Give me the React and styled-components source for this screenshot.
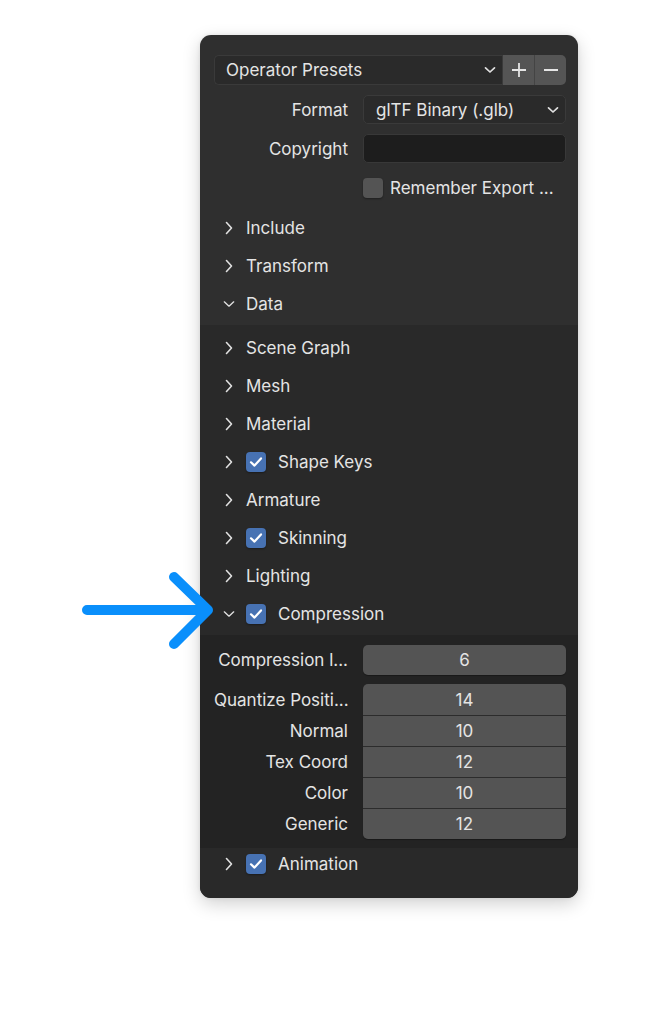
import React from 'react'
import styled, { createGlobalStyle } from 'styled-components'

const GlobalStyle = createGlobalStyle`
  html, body {
    margin: 0;
    padding: 0;
    background: #ffffff;
  }
  body {
    font-family: Inter, "Noto Sans", sans-serif;
  }
`;

const Page = styled.div`
  position: relative;
  width: 665px;
  height: 1024px;
  padding: 35px 0 0 200px;
  box-sizing: border-box;
`;

const Panel = styled.div`
  width: 378px;
  height: 863px;
  background: #2f2f2f;
  border-radius: 11px;
  overflow: hidden;
  box-shadow: 0 6px 18px rgba(0, 0, 0, 0.18), 0 0 4px rgba(0, 0, 0, 0.08);
  display: flex;
  flex-direction: column;
  padding-top: 20px;
  box-sizing: border-box;
  color: #e4e4e4;
  font-size: 17px;
`;

const Top = styled.div`
  display: flex;
  flex-direction: column;
  gap: 10px;
  padding: 0 12px 0 14px;
`;

const PresetsRow = styled.div`
  display: flex;
  height: 30px;
`;

const PresetSelect = styled.div`
  flex: 1;
  display: flex;
  align-items: center;
  justify-content: space-between;
  padding: 0 6px 0 11px;
  background: #2a2a2a;
  border: 1px solid #3a3a3a;
  border-right: none;
  border-radius: 5px 0 0 5px;
`;

const SquareButton = styled.div`
  width: 31px;
  display: flex;
  align-items: center;
  justify-content: center;
  background: #555555;
  border-left: 1px solid ${p => (p.$first ? '#3a3a3a' : '#444444')};
  border-radius: ${p => (p.$last ? '0 5px 5px 0' : '0')};
`;

const PropRow = styled.div`
  display: grid;
  grid-template-columns: 134px 1fr;
  column-gap: 15px;
  align-items: center;
  height: ${p => (p.$h ? `${p.$h}px` : 'auto')};
`;

const Label = styled.div`
  text-align: right;
  white-space: nowrap;
`;

const Select = styled.div`
  height: 29px;
  box-sizing: border-box;
  display: flex;
  align-items: center;
  justify-content: space-between;
  padding: 0 6px 0 12px;
  background: #2a2a2a;
  border: 1px solid #3a3a3a;
  border-radius: 5px;
`;

const TextField = styled.div`
  height: 29px;
  box-sizing: border-box;
  background: #1d1d1d;
  border: 1px solid #383838;
  border-radius: 5px;
`;

const CheckRow = styled.div`
  display: flex;
  align-items: center;
  gap: 7px;
`;

const Box = styled.div`
  width: 20px;
  height: 20px;
  box-sizing: border-box;
  border-radius: 4px;
  background: ${p => (p.$on ? '#4772b3' : '#545454')};
  box-shadow: 0 1px 2px rgba(0, 0, 0, 0.35);
  display: flex;
  align-items: center;
  justify-content: center;
  flex-shrink: 0;
`;

const Sections = styled.div`
  display: flex;
  flex-direction: column;
  padding-top: 7px;
`;

const HeaderRow = styled.div`
  display: flex;
  align-items: center;
  height: ${p => p.$h || 38}px;
  flex-shrink: 0;
  padding-left: 23px;
`;

const Chevron = styled.div`
  width: 12px;
  display: flex;
  justify-content: center;
  margin-right: 11px;
`;

const HeaderCheck = styled.div`
  display: flex;
  align-items: center;
  gap: 12px;
`;

const DataBody = styled.div`
  flex: 1;
  background: #292929;
  margin-top: 2px;
  padding-top: 4px;
  display: flex;
  flex-direction: column;
`;

const CompressionBody = styled.div`
  background: #232323;
  padding: 10px 12px 9px 14px;
  margin-top: 2px;
  display: flex;
  flex-direction: column;
  gap: 9px;
`;

const NumberGroup = styled.div`
  display: flex;
  flex-direction: column;
  border-radius: 5px;
  overflow: hidden;
  box-shadow: 0 1px 1px rgba(0, 0, 0, 0.3);
`;

const NumberField = styled.div`
  height: ${p => (p.$grouped ? 31 : 30)}px;
  box-sizing: border-box;
  background: #545454;
  display: flex;
  align-items: center;
  justify-content: center;
  border-radius: ${p => (p.$grouped ? '0' : '5px')};
  border-top: ${p => (p.$divider ? '1px solid #2c2c2c' : 'none')};
  box-shadow: ${p => (p.$grouped ? 'none' : '0 1px 1px rgba(0, 0, 0, 0.3)')};
`;

const Arrow = styled.svg`
  position: absolute;
  left: 0;
  top: 0;
  pointer-events: none;
`;

const ChevronRight = () => (
  <svg width="8" height="14" viewBox="0 0 8 14">
    <path d="M1.5 1.5 L6.5 7 L1.5 12.5" fill="none" stroke="#e0e0e0" strokeWidth="1.6" strokeLinecap="round" strokeLinejoin="round" />
  </svg>
);

const ChevronDown = () => (
  <svg width="14" height="8" viewBox="0 0 14 8">
    <path d="M1.5 1.5 L7 6.5 L12.5 1.5" fill="none" stroke="#e0e0e0" strokeWidth="1.6" strokeLinecap="round" strokeLinejoin="round" />
  </svg>
);

const SmallDown = () => (
  <svg width="12" height="8" viewBox="0 0 12 8">
    <path d="M1.5 1.8 L6 6 L10.5 1.8" fill="none" stroke="#e0e0e0" strokeWidth="1.7" strokeLinecap="round" strokeLinejoin="round" />
  </svg>
);

const Tick = () => (
  <svg width="14" height="12" viewBox="0 0 14 12">
    <path d="M2 6.3 L5.5 9.6 L12 2.4" fill="none" stroke="#ffffff" strokeWidth="2.2" strokeLinecap="round" strokeLinejoin="round" />
  </svg>
);

const Section = ({ title, open, checked, h }) => (
  <HeaderRow $h={h}>
    <Chevron>{open ? <ChevronDown /> : <ChevronRight />}</Chevron>
    {checked ? (
      <HeaderCheck>
        <Box $on><Tick /></Box>
        <span>{title}</span>
      </HeaderCheck>
    ) : (
      <span>{title}</span>
    )}
  </HeaderRow>
);

const quantize = [
  ['Quantize Positi...', 14],
  ['Normal', 10],
  ['Tex Coord', 12],
  ['Color', 10],
  ['Generic', 12],
];

export default function App() {
  return (
    <Page>
      <GlobalStyle />
      <Panel>
        <Top>
          <PresetsRow>
            <PresetSelect>
              <span>Operator Presets</span>
              <SmallDown />
            </PresetSelect>
            <SquareButton $first>
              <svg width="16" height="16" viewBox="0 0 16 16">
                <path d="M8 1 V15 M1 8 H15" stroke="#e6e6e6" strokeWidth="1.8" />
              </svg>
            </SquareButton>
            <SquareButton $last>
              <svg width="16" height="16" viewBox="0 0 16 16">
                <path d="M1 8 H15" stroke="#e6e6e6" strokeWidth="1.8" />
              </svg>
            </SquareButton>
          </PresetsRow>
          <PropRow $h={29}>
            <Label>Format</Label>
            <Select>
              <span>glTF Binary (.glb)</span>
              <SmallDown />
            </Select>
          </PropRow>
          <PropRow $h={29}>
            <Label>Copyright</Label>
            <TextField />
          </PropRow>
          <PropRow $h={29}>
            <span />
            <CheckRow>
              <Box />
              <span>Remember Export ...</span>
            </CheckRow>
          </PropRow>
        </Top>
        <Sections>
          <Section title="Include" />
          <Section title="Transform" />
          <Section title="Data" open />
        </Sections>
        <DataBody>
          <Section title="Scene Graph" />
          <Section title="Mesh" />
          <Section title="Material" />
          <Section title="Shape Keys" checked />
          <Section title="Armature" />
          <Section title="Skinning" checked />
          <Section title="Lighting" />
          <Section title="Compression" open checked />
          <CompressionBody>
            <PropRow>
              <Label>Compression l...</Label>
              <NumberField>6</NumberField>
            </PropRow>
            <PropRow>
              <div>
                {quantize.map(([label]) => (
                  <PropRow key={label} $h={31}>
                    <Label>{label}</Label>
                  </PropRow>
                ))}
              </div>
              <NumberGroup>
                {quantize.map(([label, value], i) => (
                  <NumberField key={label} $grouped $divider={i > 0}>
                    {value}
                  </NumberField>
                ))}
              </NumberGroup>
            </PropRow>
          </CompressionBody>
          <Section title="Animation" checked h={32} />
        </DataBody>
      </Panel>
      <Arrow width="665" height="1024" viewBox="0 0 665 1024">
        <path
          d="M87 610 H206 M174 577 L208 610 L174 644"
          fill="none"
          stroke="#0a8ffb"
          strokeWidth="10"
          strokeLinecap="round"
          strokeLinejoin="round"
        />
      </Arrow>
    </Page>
  );
}
